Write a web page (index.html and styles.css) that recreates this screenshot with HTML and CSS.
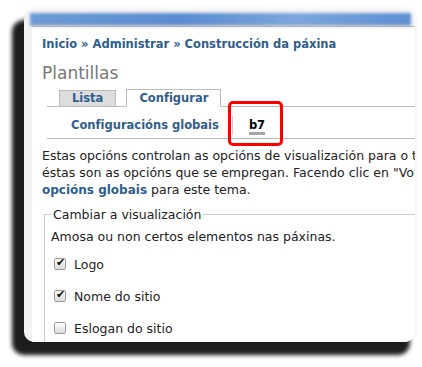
FILE: index.html
```html
<!DOCTYPE html>
<html lang="gl">
<head>
    <meta charset="UTF-8">
    <meta name="viewport" content="width=device-width, initial-scale=1.0">
    <title>Plantillas</title>
    <link rel="stylesheet" href="styles.css">
</head>
<body>
    <div class="frame">
        <div class="card">
            <div class="band"></div>
            <div class="page">
                <div class="breadcrumb">
                    <a href="#">Inicio</a> » <a href="#">Administrar</a> » <a href="#">Construcción da páxina</a>
                </div>
                <h1>Plantillas</h1>

                <!-- lapelas principais -->
                <ul class="tabs">
                    <li class="tab"><a href="#">Lista</a></li>
                    <li class="tab active"><a href="#">Configurar</a></li>
                </ul>

                <!-- lapelas secundarias -->
                <ul class="subtabs">
                    <li class="subtab"><a href="#">Configuracións globais</a></li>
                    <li class="subtab current">
                        <a href="#">b7</a>
                        <span class="highlight"></span>
                    </li>
                </ul>

                <p class="help">
                    Estas opcións controlan as opcións de visualización para o tema b7. Cando o sitio se amose usando este tema,<br>
                    éstas son as opcións que se empregan. Facendo clic en "Volver aos valores predeterminados", pode escoller usar as<br>
                    <a href="#">opcións globais</a> para este tema.
                </p>

                <fieldset class="box">
                    <legend>Cambiar a visualización</legend>
                    <div class="description">Amosa ou non certos elementos nas páxinas.</div>
                    <label class="check"><input type="checkbox" checked> Logo</label>
                    <label class="check"><input type="checkbox" checked> Nome do sitio</label>
                    <label class="check"><input type="checkbox"> Eslogan do sitio</label>
                </fieldset>
            </div>
        </div>
    </div>
</body>
</html>
```

FILE: styles.css
```css
html, body {
    height: 100%;
}
body {
    margin: 0;
    background: #ffffff;
    font-family: "DejaVu Sans", Verdana, sans-serif;
    font-size: 12.5px;
    color: #222222;
}
.frame {
    position: relative;
    padding: 10px 0 25px 24px;
}
/* sombra escura do recorte */
.frame::before {
    content: "";
    position: absolute;
    left: 12px;
    top: 20px;
    width: 398px;
    height: 335px;
    background: #1c1c1c;
    border-radius: 12px;
    filter: blur(2.2px);
}
.card {
    position: relative;
    width: 391px;
    height: 332px;
    background: #f3f3f3;
    border-radius: 10px;
    overflow: hidden;
    box-shadow: 0 -1px 5px rgba(0, 0, 0, 0.08);
    display: flex;
    flex-direction: column;
}
.band {
    height: 12px;
    margin: 3px 4px 0 6px;
    background: linear-gradient(90deg, #6d9bd6, #5a8bd0 40%, #7ca6dc 70%, #5e8fd3);
    filter: blur(1.5px);
    border-bottom: 1px solid #a9a9a9;
    flex-shrink: 0;
}
.page {
    flex: 1;
    margin-left: 8px;
    padding: 8px 0 0 10px;
    background: #ffffff;
    border-top: 1px solid #bbbbbb;
    white-space: nowrap;
}
a {
    color: #2f5d8e;
    text-decoration: none;
    font-weight: bold;
    font-size: 11.5px;
}
.breadcrumb {
    font-weight: bold;
    font-size: 11.5px;
    color: #2f5d8e;
    line-height: 18px;
}
h1 {
    margin: 10px 0 0;
    font-size: 17px;
    font-weight: normal;
    color: #777777;
    line-height: 20px;
}
.tabs {
    list-style: none;
    margin: 6px 0 0 5px;
    padding: 0 0 0 12px;
    display: flex;
    gap: 10px;
    border-bottom: 1px solid #bbbbbb;
    width: 600px;
}
.tab {
    margin-bottom: -1px;
}
.tab a {
    display: block;
    padding: 0 12px;
    line-height: 15px;
    border: 1px solid #bbbbbb;
    background: #dddddd;
}
.tab.active a {
    background: #ffffff;
    border-bottom-color: #ffffff;
    line-height: 16px;
}
.tabs .tab:first-child {
    align-self: flex-end;
}
.subtabs {
    list-style: none;
    margin: 0 0 0 5px;
    padding: 9px 0 3px 24px;
    display: flex;
    border-bottom: 1px solid #bbbbbb;
    width: 600px;
}
.subtab {
    line-height: 18px;
}
.subtab + .subtab {
    border-left: 1px solid #cccccc;
    margin-left: 13px;
    padding-left: 16px;
    position: relative;
}
.subtab.current a {
    color: #000000;
    display: inline-block;
    border-bottom: 3px solid #a6a6a6;
    line-height: 14px;
    padding-top: 2px;
}
.highlight {
    position: absolute;
    left: -5px;
    top: -15px;
    width: 49px;
    height: 39px;
    border: 3px solid #ff0000;
    border-radius: 5px;
}
.help {
    margin: 8px 0 0;
    line-height: 17px;
}
.help a {
    font-size: 12px;
}
.box {
    margin: 8px 0 0 2px;
    padding: 4px 7px 10px 6px;
    border: 1px solid #cccccc;
    width: 600px;
}
.box legend {
    padding: 0 2px;
    color: #222222;
}
.description {
    line-height: 18px;
    margin-top: 2px;
}
.check {
    display: flex;
    align-items: center;
    gap: 8px;
    margin-top: 12px;
    height: 20px;
}
.description + .check {
    margin-top: 8px;
}
.check input {
    appearance: none;
    margin: 0 0 0 3px;
    width: 12px;
    height: 12px;
    border: 1px solid #9a9a9a;
    border-radius: 2px;
    background: linear-gradient(#ffffff, #dcdcdc);
    position: relative;
}
.check input:checked::after {
    content: "✔";
    position: absolute;
    left: 1px;
    top: -3px;
    font-size: 11px;
    color: #111111;
}
```
